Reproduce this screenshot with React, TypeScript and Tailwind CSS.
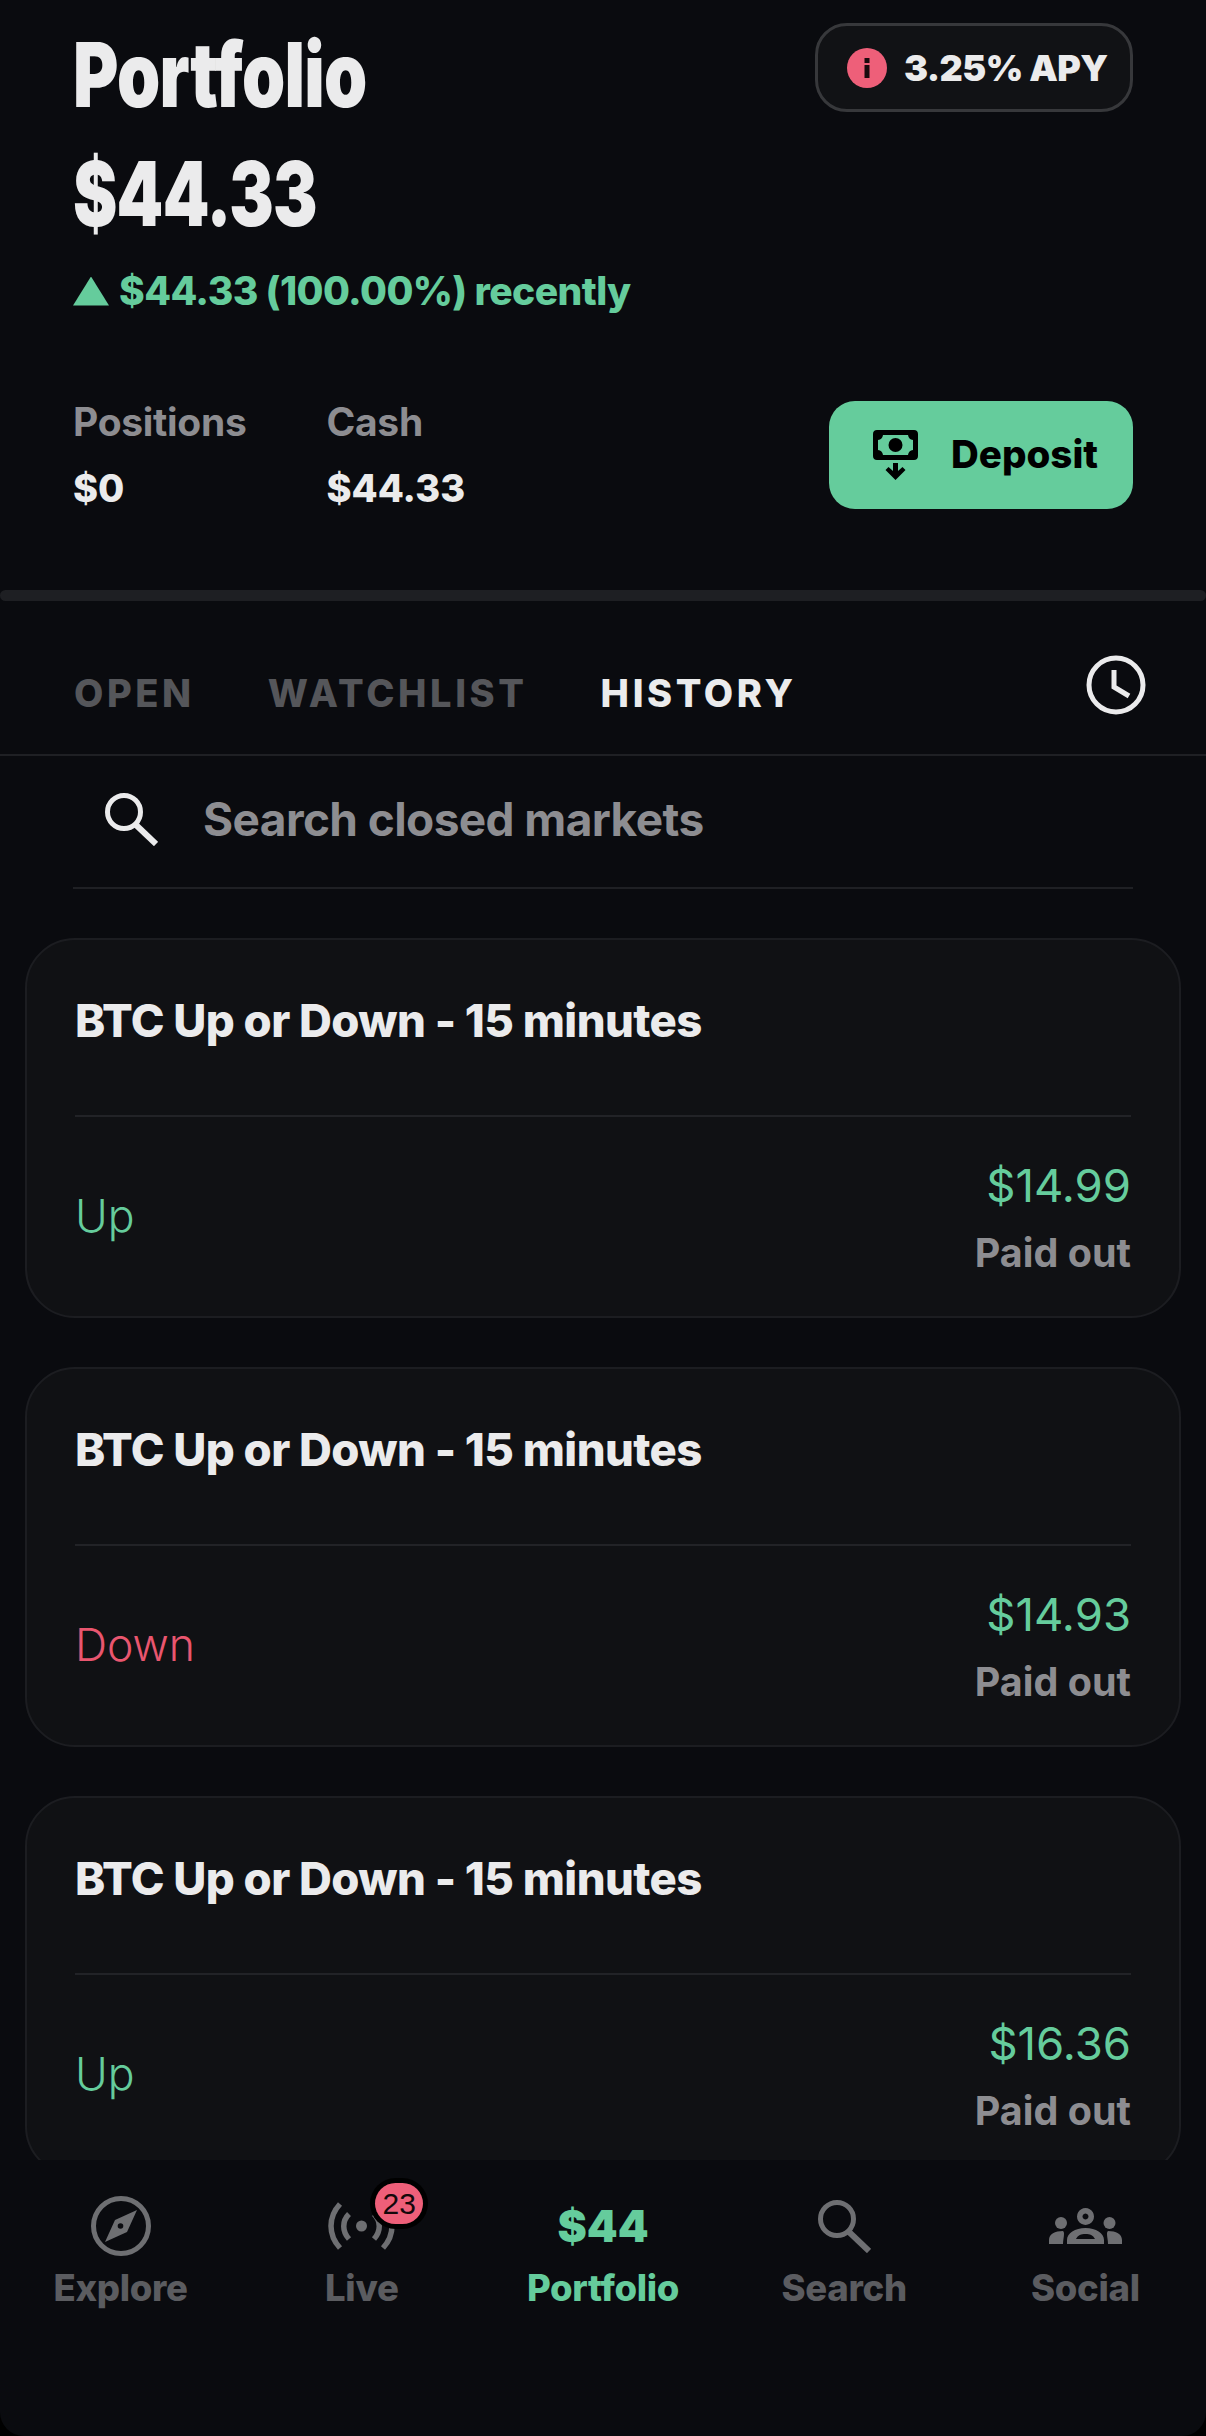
import { ReactNode } from 'react';

const trades = [
  { side: 'Up', sideClass: 'text-[#65cc9c]', amount: '$14.99' },
  { side: 'Down', sideClass: 'text-[#e9566f]', amount: '$14.93' },
  { side: 'Up', sideClass: 'text-[#65cc9c]', amount: '$16.36' },
];

const CompassIcon = () => (
  <svg className="text-[#6e6f72]" width="60" height="60" viewBox="0 0 60 60" fill="none">
    <circle cx="30" cy="30" r="27.500" stroke="currentColor" strokeWidth="5" />
    <path d="M46 14 L36 36 L14 46 L24 24 Z" fill="currentColor" />
    <circle cx="29.500" cy="30" r="2.800" fill="#0a0b0f" />
  </svg>
);

const LiveIcon = () => (
  <svg className="text-[#6e6f72]" width="67" height="48" viewBox="0 0 67 48" fill="none" stroke="currentColor" strokeWidth="5.500">
    <path d="M12 2 C0 15 0 33 12 46" />
    <path d="M55 2 C67 15 67 33 55 46" />
    <path d="M21 12 C14 19 14 29 21 37" />
    <path d="M46 12 C53 19 53 29 46 37" />
    <circle cx="33.500" cy="24" r="5.500" fill="currentColor" stroke="none" />
  </svg>
);

const SearchIcon = ({ width }: { width: number }) => (
  <svg width="53" height="53" viewBox="0 0 53 53" fill="none" stroke="currentColor" strokeWidth={width}>
    <circle cx="19" cy="19" r="16.500" />
    <path d="M30 31 L51 51" strokeWidth={width + 1} />
  </svg>
);

const SocialIcon = () => (
  <svg className="text-[#6e6f72]" width="73" height="36" viewBox="0 0 73 36" fill="currentColor">
    <path fillRule="evenodd" d="M36.500 0 a8.500 8.500 0 1 0 0.010 0 Z M36.500 5.500 a3 3 0 1 1 -0.010 0 Z" />
    <circle cx="12" cy="15" r="6" />
    <circle cx="60.500" cy="15" r="6" />
    <path d="M0 36 V32 C0 26 6 23 14 23 C15 24 15 25 15 26 C15 29 14 32 14 36 Z" />
    <path d="M73 36 V32 C73 26 67 23 59 23 C58 24 58 25 58 26 C58 29 59 32 59 36 Z" />
    <path fillRule="evenodd" d="M18 36 V32 C18 25 26 20 36.500 20 C47 20 55 25 55 32 V36 Z M27 31 H46 C44 27 41 26 36.500 26 C32 26 29 27 27 31 Z" />
  </svg>
);

const MoneyIcon = () => (
  <svg width="46" height="50" viewBox="0 0 46 50" fill="#000">
    <path
      fillRule="evenodd"
      d="M4 0 H41 C43.500 0 45 1.500 45 4 V26 C45 28.500 43.500 30 41 30 H4 C1.500 30 0 28.500 0 26 V4 C0 1.500 1.500 0 4 0 Z M10 5 C9.500 8 8 9.500 5 10 V20 C8 20.500 9.500 22 10 25 H35 C35.500 22 37 20.500 40 20 V10 C37 9.500 35.500 8 35 5 Z"
    />
    <circle cx="22.500" cy="15" r="7" />
    <path d="M20 33 H25 V41 L29.500 37 L32.500 40 L22.500 50 L12.500 40 L15.500 37 L20 41 Z" />
  </svg>
);

const NavItem = ({ icon, label, active }: { icon: ReactNode; label: string; active?: boolean }) => (
  <div className={`flex flex-col items-center ${active ? 'text-[#65cc9c]' : 'text-[#5b5c60]'}`}>
    <div className="relative flex h-[76px] items-center justify-center">{icon}</div>
    <span className="mt-[4px] text-[36.500px] leading-[40px] font-extrabold tracking-[-0.3px]">{label}</span>
  </div>
);

const TradeCard = ({ side, sideClass, amount }: { side: string; sideClass: string; amount: string }) => (
  <div className="mx-[25px] h-[380px] shrink-0 rounded-[50px] border-2 border-[#1c1d21] bg-[#101114] px-[48px]">
    <div className="flex h-[177px] items-start border-b-2 border-[#222327] pt-[53px]">
      <h3 className="text-[45.500px] leading-[56px] font-extrabold tracking-[-0.6px] text-[#ebebec]">BTC Up or Down - 15 minutes</h3>
    </div>
    <div className="flex h-[199px] items-center justify-between">
      <span className={`text-[44.500px] font-light ${sideClass}`}>{side}</span>
      <div className="flex flex-col items-end gap-[16px]">
        <span className="text-[45.500px] leading-[56px] font-normal text-[#65cc9c]">{amount}</span>
        <span className="text-[39.500px] leading-[46px] font-bold text-[#8d8d91]">Paid out</span>
      </div>
    </div>
  </div>
);

export default function App() {
  return (
    <div className="bg-black">
      <div className="flex h-[2436px] w-[1206px] flex-col overflow-hidden rounded-b-[24px] bg-[#0a0b0f] font-['Inter',sans-serif]">
        <section className="flex h-[590px] shrink-0 flex-col px-[73px]">
          <div className="flex items-start justify-between">
            <div>
              <h1 className="mt-[25px] origin-left scale-x-[.77] text-[90px] leading-[100px] font-black tracking-[-1px] whitespace-nowrap text-[#ebebec]">
                Portfolio
              </h1>
              <p className="mt-[19px] origin-left scale-x-[.74] text-[90px] leading-[100px] font-black tracking-[-1px] whitespace-nowrap text-[#ebebec]">
                $44.33
              </p>
            </div>
            <div className="mt-[23px] flex h-[89px] w-[318px] shrink-0 items-center gap-[17px] rounded-[32px] border-[3px] border-[#37383b] bg-[#111215] pl-[29px]">
              <svg width="40" height="40" viewBox="0 0 40 40">
                <circle cx="20" cy="20" r="20" fill="#ee5f79" />
                <rect x="17.500" y="10" width="5" height="5" fill="#1a0a0e" />
                <rect x="17.500" y="17" width="5" height="13" fill="#1a0a0e" />
              </svg>
              <span className="text-[36px] font-black tracking-[-0.6px] text-[#ebebec]">3.25% APY</span>
            </div>
          </div>
          <div className="mt-[25px] flex items-center gap-[10px]">
            <span className="h-[29px] w-[36px] bg-[#65cc9c] [clip-path:polygon(50%_0,100%_100%,0_100%)]" />
            <span className="text-[39px] leading-[44px] font-extrabold tracking-[-0.6px] text-[#65cc9c]">$44.33 (100.00%) recently</span>
          </div>
          <div className="mt-[87px] flex items-center justify-between">
            <div className="flex gap-[80px]">
              <div className="flex flex-col gap-[22px]">
                <span className="text-[39px] leading-[44px] font-bold tracking-[-0.3px] text-[#8d8d91]">Positions</span>
                <span className="text-[38px] leading-[44px] font-extrabold text-[#ebebec]">$0</span>
              </div>
              <div className="flex flex-col gap-[22px]">
                <span className="text-[39px] leading-[44px] font-bold tracking-[-0.3px] text-[#8d8d91]">Cash</span>
                <span className="text-[38px] leading-[44px] font-extrabold text-[#ebebec]">$44.33</span>
              </div>
            </div>
            <button className="flex h-[108px] w-[304px] items-center gap-[32px] rounded-[26px] bg-[#65cc9c] pl-[44px]">
              <MoneyIcon />
              <span className="text-[38.500px] font-extrabold text-black">Deposit</span>
            </button>
          </div>
        </section>

        <div className="h-[11px] shrink-0 rounded-full bg-[#1e1f23]" />

        <nav className="flex h-[155px] shrink-0 items-center justify-between border-b-2 border-[#1f2024] pt-[31px] pr-[60px] pl-[74px]">
          <div className="flex gap-[73px] text-[38px] font-extrabold tracking-[3.6px]">
            <span className="text-[#55565a]">OPEN</span>
            <span className="text-[#55565a]">WATCHLIST</span>
            <span className="text-[#ebebec]">HISTORY</span>
          </div>
          <svg className="mb-[16px]" width="60" height="60" viewBox="0 0 60 60" fill="none" stroke="#ebebec" strokeWidth="5">
            <circle cx="30" cy="30" r="27" />
            <path d="M28 15 V32 L43 41" />
          </svg>
        </nav>

        <div className="mx-[73px] flex h-[133px] shrink-0 items-center gap-[46px] border-b-2 border-[#1f2024] pb-[4px] pl-[32px] text-[#ebebec]">
          <SearchIcon width={5} />
          <span className="-ml-[1px] text-[46px] font-bold tracking-[-0.6px] text-[#8d8d91]">Search closed markets</span>
        </div>

        <div className="mt-[49px] flex min-h-0 flex-1 flex-col gap-[49px] overflow-hidden">
          {trades.map((t, i) => (
            <TradeCard key={i} {...t} />
          ))}
        </div>

        <footer className="grid h-[276px] shrink-0 grid-cols-5 pt-[28px]">
          <NavItem icon={<CompassIcon />} label="Explore" />
          <NavItem
            icon={
              <>
                <LiveIcon />
                <span className="absolute -top-[5px] -right-[28px] flex h-[41px] w-[48px] items-center justify-center rounded-full bg-[#ee5f79] font-['Liberation_Sans',sans-serif] text-[30px] text-[#14080b] ring-[5px] ring-black">
                  23
                </span>
              </>
            }
            label="Live"
          />
          <NavItem icon={<span className="text-[44px] leading-none font-black">$44</span>} label="Portfolio" active />
          <NavItem icon={<span className="text-[#6e6f72]"><SearchIcon width={5} /></span>} label="Search" />
          <NavItem icon={<SocialIcon />} label="Social" />
        </footer>
      </div>
    </div>
  );
}
